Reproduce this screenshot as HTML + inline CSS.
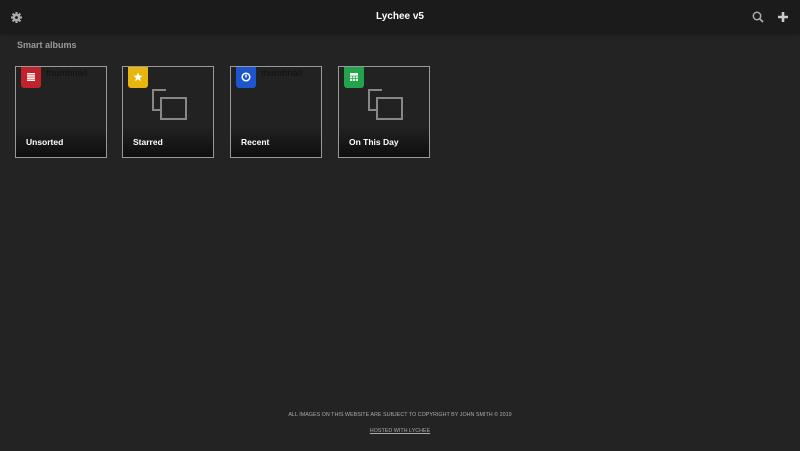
<!DOCTYPE html>
<html><head><style>
body{margin:0;width:800px;height:451px;background:#232323;font-family:"Liberation Sans",sans-serif;overflow:hidden;position:relative}
.hdr{position:absolute;left:0;top:0;width:800px;height:33px;background:#1b1b1b;box-shadow:0 1px 3px rgba(0,0,0,.4)}
.title{position:absolute;left:0;width:800px;top:11px;text-align:center;color:#fff;font-size:10px;font-weight:bold}
.sa{position:absolute;left:17px;top:40px;color:#999;font-size:9px;font-weight:bold}
.card{position:absolute;top:66px;width:90px;height:90px;border:1px solid #999;background:#222;overflow:hidden}
.card .g{position:absolute;left:0;right:0;bottom:0;height:30px;background:linear-gradient(#222,#0e0e0e)}
.card .t{position:absolute;left:10px;top:70px;color:#fff;font-size:8.5px;font-weight:bold}
.badge{position:absolute;left:5px;top:-1px;width:20px;height:22px;border-radius:0 0 3px 3px}
.thumb{position:absolute;left:30px;top:1px;color:#111;font-size:9.5px}
.ic{position:absolute;left:29px;top:22px}
.foot{position:absolute;left:0;width:800px;text-align:center;color:#aaa;font-size:5.4px}
</style></head><body>
<div class="hdr">
<svg style="position:absolute;left:11px;top:12px" width="11" height="11" viewBox="0 0 10 10"><g fill="#aaa"><rect x="4" y="0" width="2" height="10"/><rect x="0" y="4" width="10" height="2"/><rect x="4" y="0" width="2" height="10" transform="rotate(45 5 5)"/><rect x="4" y="0" width="2" height="10" transform="rotate(-45 5 5)"/><circle cx="5" cy="5" r="3.5"/></g><circle cx="5" cy="5" r="1.3" fill="#1b1b1b"/></svg>
<div class="title">Lychee v5</div>
<svg style="position:absolute;left:752px;top:11px" width="12" height="12" viewBox="0 0 12 12"><circle cx="5" cy="5" r="3.7" fill="none" stroke="#aaa" stroke-width="1.5"/><path d="M7.7 7.7L11 11" stroke="#aaa" stroke-width="1.8"/></svg>
<svg style="position:absolute;left:777px;top:11px" width="12" height="12" viewBox="0 0 12 12"><path d="M6 1v10M1 6h10" stroke="#ccc" stroke-width="2.6"/></svg>
</div>
<div class="sa">Smart albums</div>

<div class="card" style="left:15px"><div class="thumb">thumbnail</div><div class="g"></div><div class="t">Unsorted</div>
<div class="badge" style="background:#c0232b"><svg style="position:absolute;left:6px;top:7px" width="8" height="8" viewBox="0 0 8 8" fill="#fff"><rect y="0" width="8" height="1.5"/><rect y="2.2" width="8" height="1.5"/><rect y="4.4" width="8" height="1.5"/><rect y="6.5" width="8" height="1.5"/></svg></div></div>

<div class="card" style="left:122px"><svg class="ic" width="36" height="32" viewBox="0 0 36 32"><path d="M14 1H1V21H8" fill="none" stroke="#888" stroke-width="2"/><rect x="9" y="9" width="25" height="21" fill="none" stroke="#888" stroke-width="2"/></svg><div class="g"></div><div class="t">Starred</div>
<div class="badge" style="background:#e8b50e"><svg style="position:absolute;left:5px;top:6px" width="10" height="10" viewBox="0 0 10 10"><path d="M5 0.5L6.3 3.6 9.5 3.8 7 5.9 7.9 9.2 5 7.4 2.1 9.2 3 5.9 0.5 3.8 3.7 3.6Z" fill="#fff"/></svg></div></div>

<div class="card" style="left:230px"><div class="thumb">thumbnail</div><div class="g"></div><div class="t">Recent</div>
<div class="badge" style="background:#1d55cf"><svg style="position:absolute;left:5px;top:6px" width="10" height="10" viewBox="0 0 10 10"><circle cx="5" cy="5" r="3.8" fill="none" stroke="#fff" stroke-width="1.5"/><path d="M5 2.6V5.5" stroke="#fff" stroke-width="1.4"/></svg></div></div>

<div class="card" style="left:338px"><svg class="ic" width="36" height="32" viewBox="0 0 36 32"><path d="M14 1H1V21H8" fill="none" stroke="#888" stroke-width="2"/><rect x="9" y="9" width="25" height="21" fill="none" stroke="#888" stroke-width="2"/></svg><div class="g"></div><div class="t">On This Day</div>
<div class="badge" style="background:#22a44a"><svg style="position:absolute;left:5px;top:6px" width="10" height="10" viewBox="0 0 10 10"><rect x="1" y="1" width="8" height="8" fill="#fff"/><path d="M1 4h8M1 6.3h8M3.7 4v5M6.3 4v5" stroke="#22a44a" stroke-width=".8"/></svg></div></div>

<div class="foot" style="top:412px">ALL IMAGES ON THIS WEBSITE ARE SUBJECT TO COPYRIGHT BY JOHN SMITH © 2019</div>
<div class="foot" style="top:428px;text-decoration:underline">HOSTED WITH LYCHEE</div>
</body></html>
